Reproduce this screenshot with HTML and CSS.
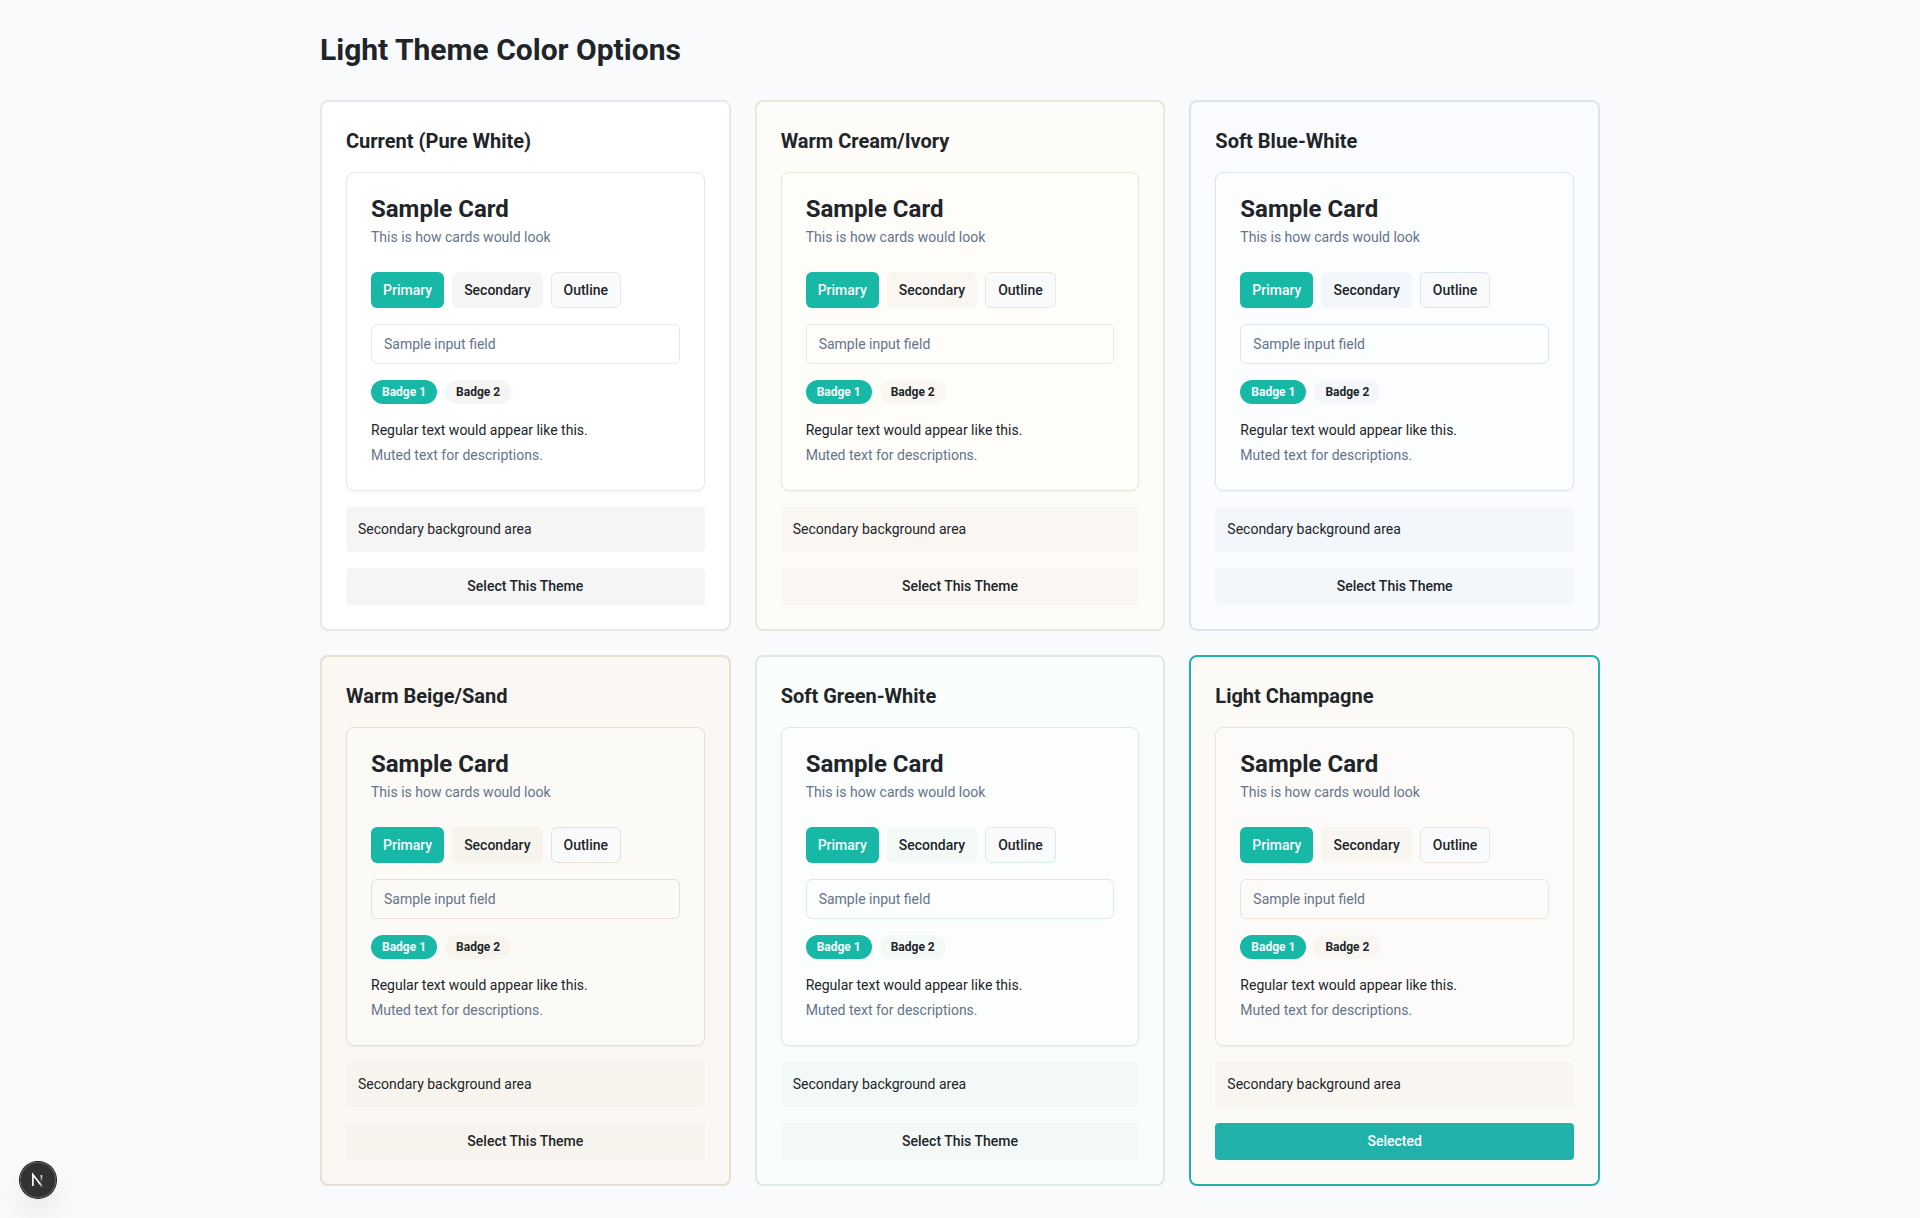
FILE: index.html
```
<!DOCTYPE html>
<html lang="en">
<head>
<meta charset="utf-8">
<meta name="viewport" content="width=device-width, initial-scale=1">
<title>Light Theme Color Options</title>
<link rel="stylesheet" href="styles.css">
</head>
<body>
<main class="page">
  <h1 class="page-title">Light Theme Color Options</h1>
  <div class="theme-grid">

    <section class="theme theme-white">
      <h2 class="theme-name">Current (Pure White)</h2>
      <article class="card">
        <header class="card-header">
          <h3 class="card-title">Sample Card</h3>
          <p class="muted">This is how cards would look</p>
        </header>
        <div class="card-body">
          <div class="row">
            <button type="button" class="btn btn-primary">Primary</button>
            <button type="button" class="btn btn-secondary">Secondary</button>
            <button type="button" class="btn btn-outline">Outline</button>
          </div>
          <input class="field" type="text" placeholder="Sample input field" aria-label="Sample input field">
          <div class="row">
            <span class="badge badge-primary">Badge 1</span>
            <span class="badge badge-secondary">Badge 2</span>
          </div>
          <div class="copy">
            <p>Regular text would appear like this.</p>
            <p class="muted">Muted text for descriptions.</p>
          </div>
        </div>
      </article>
      <div class="area">Secondary background area</div>
      <button type="button" class="select">Select This Theme</button>
    </section>

    <section class="theme theme-cream">
      <h2 class="theme-name">Warm Cream/Ivory</h2>
      <article class="card">
        <header class="card-header">
          <h3 class="card-title">Sample Card</h3>
          <p class="muted">This is how cards would look</p>
        </header>
        <div class="card-body">
          <div class="row">
            <button type="button" class="btn btn-primary">Primary</button>
            <button type="button" class="btn btn-secondary">Secondary</button>
            <button type="button" class="btn btn-outline">Outline</button>
          </div>
          <input class="field" type="text" placeholder="Sample input field" aria-label="Sample input field">
          <div class="row">
            <span class="badge badge-primary">Badge 1</span>
            <span class="badge badge-secondary">Badge 2</span>
          </div>
          <div class="copy">
            <p>Regular text would appear like this.</p>
            <p class="muted">Muted text for descriptions.</p>
          </div>
        </div>
      </article>
      <div class="area">Secondary background area</div>
      <button type="button" class="select">Select This Theme</button>
    </section>

    <section class="theme theme-blue">
      <h2 class="theme-name">Soft Blue-White</h2>
      <article class="card">
        <header class="card-header">
          <h3 class="card-title">Sample Card</h3>
          <p class="muted">This is how cards would look</p>
        </header>
        <div class="card-body">
          <div class="row">
            <button type="button" class="btn btn-primary">Primary</button>
            <button type="button" class="btn btn-secondary">Secondary</button>
            <button type="button" class="btn btn-outline">Outline</button>
          </div>
          <input class="field" type="text" placeholder="Sample input field" aria-label="Sample input field">
          <div class="row">
            <span class="badge badge-primary">Badge 1</span>
            <span class="badge badge-secondary">Badge 2</span>
          </div>
          <div class="copy">
            <p>Regular text would appear like this.</p>
            <p class="muted">Muted text for descriptions.</p>
          </div>
        </div>
      </article>
      <div class="area">Secondary background area</div>
      <button type="button" class="select">Select This Theme</button>
    </section>

    <section class="theme theme-beige">
      <h2 class="theme-name">Warm Beige/Sand</h2>
      <article class="card">
        <header class="card-header">
          <h3 class="card-title">Sample Card</h3>
          <p class="muted">This is how cards would look</p>
        </header>
        <div class="card-body">
          <div class="row">
            <button type="button" class="btn btn-primary">Primary</button>
            <button type="button" class="btn btn-secondary">Secondary</button>
            <button type="button" class="btn btn-outline">Outline</button>
          </div>
          <input class="field" type="text" placeholder="Sample input field" aria-label="Sample input field">
          <div class="row">
            <span class="badge badge-primary">Badge 1</span>
            <span class="badge badge-secondary">Badge 2</span>
          </div>
          <div class="copy">
            <p>Regular text would appear like this.</p>
            <p class="muted">Muted text for descriptions.</p>
          </div>
        </div>
      </article>
      <div class="area">Secondary background area</div>
      <button type="button" class="select">Select This Theme</button>
    </section>

    <section class="theme theme-green">
      <h2 class="theme-name">Soft Green-White</h2>
      <article class="card">
        <header class="card-header">
          <h3 class="card-title">Sample Card</h3>
          <p class="muted">This is how cards would look</p>
        </header>
        <div class="card-body">
          <div class="row">
            <button type="button" class="btn btn-primary">Primary</button>
            <button type="button" class="btn btn-secondary">Secondary</button>
            <button type="button" class="btn btn-outline">Outline</button>
          </div>
          <input class="field" type="text" placeholder="Sample input field" aria-label="Sample input field">
          <div class="row">
            <span class="badge badge-primary">Badge 1</span>
            <span class="badge badge-secondary">Badge 2</span>
          </div>
          <div class="copy">
            <p>Regular text would appear like this.</p>
            <p class="muted">Muted text for descriptions.</p>
          </div>
        </div>
      </article>
      <div class="area">Secondary background area</div>
      <button type="button" class="select">Select This Theme</button>
    </section>

    <section class="theme theme-champagne theme-selected">
      <h2 class="theme-name">Light Champagne</h2>
      <article class="card">
        <header class="card-header">
          <h3 class="card-title">Sample Card</h3>
          <p class="muted">This is how cards would look</p>
        </header>
        <div class="card-body">
          <div class="row">
            <button type="button" class="btn btn-primary">Primary</button>
            <button type="button" class="btn btn-secondary">Secondary</button>
            <button type="button" class="btn btn-outline">Outline</button>
          </div>
          <input class="field" type="text" placeholder="Sample input field" aria-label="Sample input field">
          <div class="row">
            <span class="badge badge-primary">Badge 1</span>
            <span class="badge badge-secondary">Badge 2</span>
          </div>
          <div class="copy">
            <p>Regular text would appear like this.</p>
            <p class="muted">Muted text for descriptions.</p>
          </div>
        </div>
      </article>
      <div class="area">Secondary background area</div>
      <button type="button" class="select">Selected</button>
    </section>

  </div>
</main>

<button type="button" class="dev-badge" aria-label="Open developer tools">
  <svg width="36" height="36" viewBox="0 0 40 40" fill="none" aria-hidden="true">
    <defs>
      <linearGradient id="diagonal" x1="9.956" y1="11.123" x2="15.478" y2="17.967" gradientUnits="userSpaceOnUse">
        <stop stop-color="#fff"/>
        <stop offset="0.604" stop-color="#fff" stop-opacity="0"/>
        <stop offset="1" stop-color="#fff" stop-opacity="0"/>
      </linearGradient>
      <linearGradient id="stem" x1="11.822" y1="1.4" x2="11.791" y2="9.625" gradientUnits="userSpaceOnUse">
        <stop stop-color="#fff"/>
        <stop offset="1" stop-color="#fff" stop-opacity="0"/>
      </linearGradient>
    </defs>
    <g transform="translate(12 13)" stroke-width="1.86">
      <path d="M13.3 15.2 2.34 1v12.6" stroke="url(#diagonal)"/>
      <path d="M11.825 1.5v11.6" stroke="url(#stem)"/>
    </g>
  </svg>
</button>
</body>
</html>
```
FILE: styles.css
```
:root {
  --page: #f9fafc;
  --ink: #212529;
  --muted: #64748b;
  --primary: #17b8a6;
  --selected: #20b2aa;
}

*,
*::before,
*::after {
  box-sizing: border-box;
}

body,
h1,
h2,
h3,
p {
  margin: 0;
}

body {
  background: var(--page);
  color: var(--ink);
  font-family: Roboto, "Liberation Sans", sans-serif;
  font-size: 14px;
  line-height: 21px;
}

button,
input {
  font: inherit;
  color: inherit;
}

button {
  cursor: pointer;
}

.page {
  max-width: 1344px;
  margin: 0 auto;
  padding: 32px;
}

.page-title {
  margin-bottom: 32px;
  font-size: 30px;
  font-weight: 700;
  line-height: 36px;
}

.theme-grid {
  display: grid;
  grid-template-columns: repeat(auto-fit, minmax(360px, 1fr));
  gap: 24px;
}

.theme {
  display: flex;
  flex-direction: column;
  gap: 16px;
  padding: 24px;
  border: 2px solid var(--line);
  border-radius: 8px;
  background: var(--surface);
}

.theme-white {
  --surface: #ffffff;
  --card: #ffffff;
  --line: #e5e7eb;
  --soft: #f5f5f5;
}

.theme-cream {
  --surface: #fdfcf8;
  --card: #fefdfa;
  --line: #ebe7db;
  --soft: #faf7f3;
}

.theme-blue {
  --surface: #fafcff;
  --card: #fcfdff;
  --line: #dce4ef;
  --soft: #f3f6fb;
}

.theme-beige {
  --surface: #fbf8f3;
  --card: #fcfaf7;
  --line: #e6dfd3;
  --soft: #f7f4ed;
}

.theme-green {
  --surface: #f9fdfb;
  --card: #fcfdfd;
  --line: #dcebe4;
  --soft: #f3f9f7;
}

.theme-champagne {
  --surface: #fcfaf6;
  --card: #fdfbf9;
  --line: #ebe5db;
  --soft: #f9f6f1;
}

.theme-selected {
  border-color: var(--selected);
}

.theme-name {
  font-size: 20px;
  font-weight: 700;
  line-height: 30px;
}

.card {
  display: flex;
  flex-direction: column;
  gap: 24px;
  padding: 24px;
  border: 1px solid var(--line);
  border-radius: 8px;
  background: var(--card);
  box-shadow: 0 1px 2px rgba(0, 0, 0, 0.05);
}

.card-header {
  display: flex;
  flex-direction: column;
  gap: 6px;
}

.card-title {
  font-size: 24px;
  font-weight: 700;
  line-height: 24px;
}

.muted {
  color: var(--muted);
}

.card-body {
  display: flex;
  flex-direction: column;
  gap: 16px;
}

.row {
  display: flex;
  flex-wrap: wrap;
  gap: 8px;
}

.btn {
  height: 36px;
  padding: 0 12px;
  border: 0;
  border-radius: 6px;
  font-weight: 500;
}

.btn-primary {
  background: var(--primary);
  color: #f8fafc;
}

.btn-secondary {
  background: var(--soft);
}

.btn-outline {
  border: 1px solid var(--line);
  background: var(--page);
}

.field {
  width: 100%;
  height: 40px;
  padding: 8px 12px;
  border: 1px solid var(--line);
  border-radius: 6px;
  background: var(--card);
}

.field::placeholder {
  color: var(--muted);
  opacity: 1;
}

.badge {
  padding: 3px 11px;
  border-radius: 12px;
  font-size: 12px;
  font-weight: 700;
  line-height: 18px;
}

.badge-primary {
  background: var(--primary);
  color: #f8fafc;
}

.badge-secondary {
  background: var(--soft);
}

.copy {
  display: flex;
  flex-direction: column;
  gap: 4px;
}

.area {
  padding: 12px;
  border-radius: 4px;
  background: var(--soft);
}

.select {
  padding: 8px 16px;
  border: 0;
  border-radius: 4px;
  background: var(--soft);
  font-weight: 500;
}

.theme-selected .select {
  background: var(--selected);
  color: #ffffff;
}

/* Floating developer indicator, pinned over the page */
.dev-badge {
  position: fixed;
  bottom: 20px;
  left: 20px;
  display: flex;
  width: 36px;
  height: 36px;
  padding: 0;
  border: 0;
  border-radius: 50%;
  background: rgba(0, 0, 0, 0.8);
  box-shadow:
    0 0 0 1px #171717,
    inset 0 0 0 1px rgba(255, 255, 255, 0.14),
    0 16px 32px -8px rgba(0, 0, 0, 0.24);
}
```
